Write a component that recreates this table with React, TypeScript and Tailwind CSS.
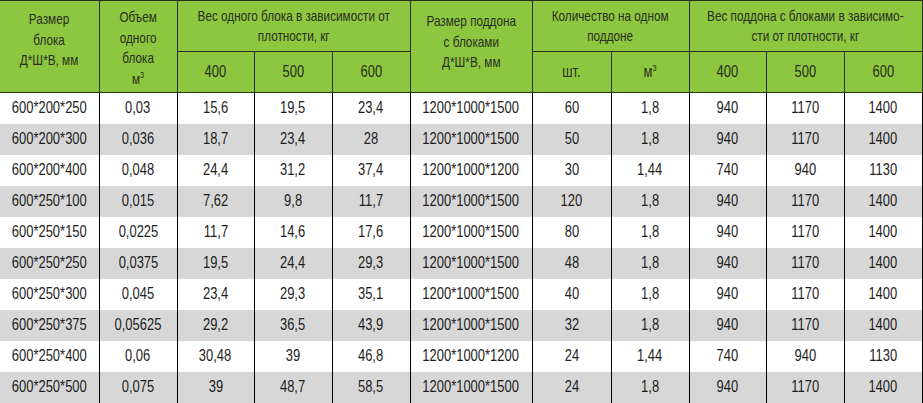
import type { ReactNode } from 'react'

const rows: string[][] = [
  ['600*200*250', '0,03', '15,6', '19,5', '23,4', '1200*1000*1500', '60', '1,8', '940', '1170', '1400'],
  ['600*200*300', '0,036', '18,7', '23,4', '28', '1200*1000*1500', '50', '1,8', '940', '1170', '1400'],
  ['600*200*400', '0,048', '24,4', '31,2', '37,4', '1200*1000*1200', '30', '1,44', '740', '940', '1130'],
  ['600*250*100', '0,015', '7,62', '9,8', '11,7', '1200*1000*1500', '120', '1,8', '940', '1170', '1400'],
  ['600*250*150', '0,0225', '11,7', '14,6', '17,6', '1200*1000*1500', '80', '1,8', '940', '1170', '1400'],
  ['600*250*250', '0,0375', '19,5', '24,4', '29,3', '1200*1000*1500', '48', '1,8', '940', '1170', '1400'],
  ['600*250*300', '0,045', '23,4', '29,3', '35,1', '1200*1000*1500', '40', '1,8', '940', '1170', '1400'],
  ['600*250*375', '0,05625', '29,2', '36,5', '43,9', '1200*1000*1500', '32', '1,8', '940', '1170', '1400'],
  ['600*250*400', '0,06', '30,48', '39', '46,8', '1200*1000*1200', '24', '1,44', '740', '940', '1130'],
  ['600*250*500', '0,075', '39', '48,7', '58,5', '1200*1000*1500', '24', '1,8', '940', '1170', '1400'],
]

const widths = [99, 78, 77, 78, 78, 122, 79, 78, 77, 78, 78]

const th = 'border border-[#26301c] font-normal align-middle text-center leading-[20px] p-0'
const thTop = 'border border-[#26301c] font-normal align-top text-center leading-[20.5px] p-0'

// condensed look: the reference uses a narrow Helvetica, we squeeze Liberation Sans
function Narrow({ children }: { children: ReactNode }) {
  return (
    <div className="flex justify-center">
      <span className="inline-block shrink-0 whitespace-nowrap origin-center scale-x-[0.81]">{children}</span>
    </div>
  )
}

const M3 = () => (
  <>
    м<sup className="text-[9px] -top-[6px]">3</sup>
  </>
)

export default function App() {
  return (
    <div
      className="w-[923px] h-[403px] overflow-hidden bg-white text-[#1e1e1e]"
      style={{ fontFamily: '"Liberation Sans", Arial, sans-serif' }}
    >
      <table className="border-collapse table-fixed w-[922px]">
        <colgroup>
          {widths.map((w, i) => (
            <col key={i} style={{ width: w }} />
          ))}
        </colgroup>
        <thead className="bg-[#8dc63f] text-[#2a2f22] text-[14.5px]">
          <tr className="h-[51px]">
            <th rowSpan={2} className={thTop + ' border-l-0 pt-[8px]'}>
              <Narrow>Размер<br />блока<br />Д*Ш*В, мм</Narrow>
            </th>
            <th rowSpan={2} className={thTop + ' pt-[6px]'}>
              <Narrow>Объем<br />одного<br />блока<br /><M3 /></Narrow>
            </th>
            <th colSpan={3} className={th}>
              <Narrow>Вес одного блока в зависимости от<br />плотности, кг</Narrow>
            </th>
            <th rowSpan={2} className={thTop + ' pt-[10px]'}>
              <Narrow>Размер поддона<br />с блоками<br />Д*Ш*В, мм</Narrow>
            </th>
            <th colSpan={2} className={th}>
              <Narrow>Количество на одном<br />поддоне</Narrow>
            </th>
            <th colSpan={3} className={th}>
              <Narrow>Вес поддона с блоками в зависимо-<br />сти от плотности, кг</Narrow>
            </th>
          </tr>
          <tr className="h-[41px] text-[16px]">
            <th className={th}><Narrow>400</Narrow></th>
            <th className={th}><Narrow>500</Narrow></th>
            <th className={th}><Narrow>600</Narrow></th>
            <th className={th}><Narrow>шт.</Narrow></th>
            <th className={th}><Narrow><M3 /></Narrow></th>
            <th className={th}><Narrow>400</Narrow></th>
            <th className={th}><Narrow>500</Narrow></th>
            <th className={th}><Narrow>600</Narrow></th>
          </tr>
        </thead>
        <tbody className="text-[16px]">
          {rows.map((r, i) => (
            <tr key={i} className={i % 2 === 1 ? 'h-[31px] bg-[#d7d7d7]' : 'h-[31px] bg-white'}>
              {r.map((c, j) => (
                <td
                  key={j}
                  className={'text-center align-middle border-r border-black p-0 ' + (j === 0 ? 'border-l-0' : 'border-l')}
                >
                  <Narrow>{c}</Narrow>
                </td>
              ))}
            </tr>
          ))}
        </tbody>
      </table>
    </div>
  )
}
